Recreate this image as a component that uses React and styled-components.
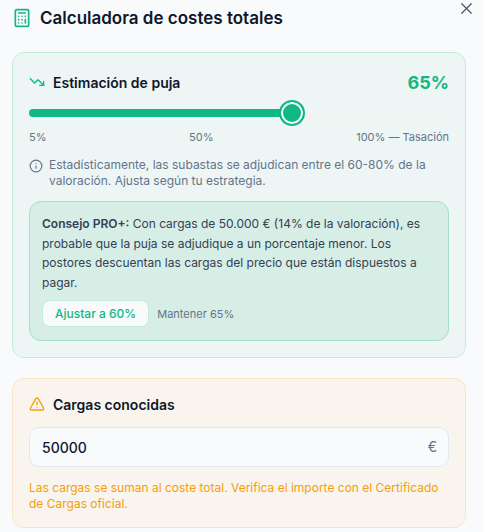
import React from 'react'
import styled, { createGlobalStyle } from 'styled-components'
import { Calculator, TrendingDown, Info, TriangleAlert, X } from 'lucide-react'

const GlobalStyle = createGlobalStyle`
  html, body {
    margin: 0;
    padding: 0;
    background: #f8fafc;
    overflow: hidden;
  }
  * { box-sizing: border-box; }
`

export default function App() {
  return (
    <Page>
      <GlobalStyle />
      <CloseButton><X size={19} strokeWidth={1.5} /></CloseButton>
      <Header>
        <Calculator size={20} color="#10b981" strokeWidth={2} />
        <Title>Calculadora de costes totales</Title>
      </Header>

      <Card $tone="green">
        <CardHead>
          <HeadLeft>
            <TrendingDown size={16} color="#10b981" strokeWidth={2} />
            <HeadTitle>Estimación de puja</HeadTitle>
          </HeadLeft>
          <Percent>65%</Percent>
        </CardHead>
        <Track>
          <Fill $pct={62.5} />
          <Thumb />
        </Track>
        <Scale>
          <span>5%</span>
          <span>50%</span>
          <span>100% — Tasación</span>
        </Scale>
        <Note>
          <Info size={14} color="#64748b" strokeWidth={2} />
          <p>Estadísticamente, las subastas se adjudican entre el 60-80% de la valoración. Ajusta según tu estrategia.</p>
        </Note>
        <Tip>
          <TipText>
            <strong>Consejo PRO+:</strong> Con cargas de 50.000 € (14% de la valoración), es probable que la puja se adjudique a un porcentaje menor. Los postores descuentan las cargas del precio que están dispuestos a pagar.
          </TipText>
          <TipActions>
            <AdjustButton>Ajustar a 60%</AdjustButton>
            <KeepLabel>Mantener 65%</KeepLabel>
          </TipActions>
        </Tip>
      </Card>

      <Card $tone="amber">
        <HeadLeft>
          <TriangleAlert size={16} color="#f59e0b" strokeWidth={2} />
          <HeadTitle>Cargas conocidas</HeadTitle>
        </HeadLeft>
        <InputWrap>
          <AmountInput defaultValue="50000" />
          <Euro>€</Euro>
        </InputWrap>
        <Warning>Las cargas se suman al coste total. Verifica el importe con el Certificado de Cargas oficial.</Warning>
      </Card>
    </Page>
  )
}

// styled-components

const Page = styled.div`
  position: relative;
  width: 484px;
  height: 532px;
  overflow: hidden;
  padding: 6px 18px 0 12px;
  background: #f8fafc;
  font-family: Inter, "Liberation Sans", sans-serif;
  color: #0f172a;
`

const CloseButton = styled.div`
  position: absolute;
  top: -1px;
  right: 8px;
  color: #475569;
  display: flex;
`

const Header = styled.div`
  display: flex;
  align-items: center;
  gap: 8px;
  height: 24px;
  margin-bottom: 22px;
`

const Title = styled.h2`
  margin: 0;
  font-size: 17px;
  line-height: 24px;
  font-weight: 600;
  color: #0f172a;
`

const Card = styled.section`
  border-radius: 12px;
  padding: ${p => (p.$tone === 'green' ? '16px' : '15px 16px')};
  margin-bottom: 20px;
  background: ${p => (p.$tone === 'green' ? '#edf6f4' : '#f9f5ee')};
  border: 1px solid ${p => (p.$tone === 'green' ? '#c0ecdc' : '#fae5c3')};
`

const CardHead = styled.div`
  display: flex;
  align-items: center;
  justify-content: space-between;
  height: 26px;
`

const HeadLeft = styled.div`
  display: flex;
  align-items: center;
  gap: 8px;
  height: 20px;
`

const HeadTitle = styled.span`
  font-size: 14px;
  font-weight: 600;
  color: #0f172a;
`

const Percent = styled.span`
  font-size: 18px;
  font-weight: 700;
  color: #10b981;
`

const Track = styled.div`
  position: relative;
  height: 8px;
  margin-top: 14px;
  border-radius: 4px;
  background: #f1f5f4;
`

const Fill = styled.div`
  height: 100%;
  width: ${p => p.$pct}%;
  border-radius: 4px;
  background: #10b981;
`

const Thumb = styled.div`
  position: absolute;
  left: 250px;
  top: -9px;
  width: 26px;
  height: 26px;
  border-radius: 50%;
  background: #10b981;
  border: 2px solid #10b981;
  box-shadow: inset 0 0 0 2px #f8fafc;
`

const Scale = styled.div`
  display: flex;
  justify-content: space-between;
  margin-top: 12px;
  font-size: 11px;
  line-height: 16px;
  color: #64748b;
`

const Note = styled.div`
  display: flex;
  gap: 6px;
  margin-top: 12px;
  font-size: 12px;
  line-height: 16px;
  color: #64748b;

  svg {
    flex-shrink: 0;
    margin-top: 2px;
  }

  p {
    margin: 0;
  }
`

const Tip = styled.div`
  margin-top: 12px;
  padding: 12px 12px 13px;
  border-radius: 12px;
  border: 1px solid #a2e0c9;
  background: #d7eee6;
`

const TipText = styled.p`
  margin: 0;
  font-size: 12px;
  line-height: 19.5px;
  color: #334155;

  strong {
    font-weight: 600;
  }
`

const TipActions = styled.div`
  display: flex;
  align-items: center;
  gap: 8px;
  margin-top: 8px;
`

const AdjustButton = styled.button`
  height: 27px;
  padding: 0 12px;
  border-radius: 8px;
  border: 1px solid #c0ecdc;
  background: #f8fafc;
  color: #10b981;
  font-family: inherit;
  font-size: 12px;
  font-weight: 500;
`

const KeepLabel = styled.span`
  font-size: 11px;
  color: #64748b;
`

const InputWrap = styled.div`
  position: relative;
  margin-top: 13px;
`

const AmountInput = styled.input`
  display: block;
  width: 100%;
  height: 40px;
  padding: 0 12px;
  border-radius: 10px;
  border: 1px solid #e2e8f0;
  background: #f8fafc;
  color: #0f172a;
  font-family: inherit;
  font-size: 14px;
  font-weight: 500;
  outline: none;
`

const Euro = styled.span`
  position: absolute;
  right: 12px;
  top: 11px;
  font-size: 14px;
  line-height: 18px;
  color: #64748b;
`

const Warning = styled.p`
  margin: 13px 0 0;
  font-size: 12px;
  line-height: 16px;
  color: #f59e0b;
`
